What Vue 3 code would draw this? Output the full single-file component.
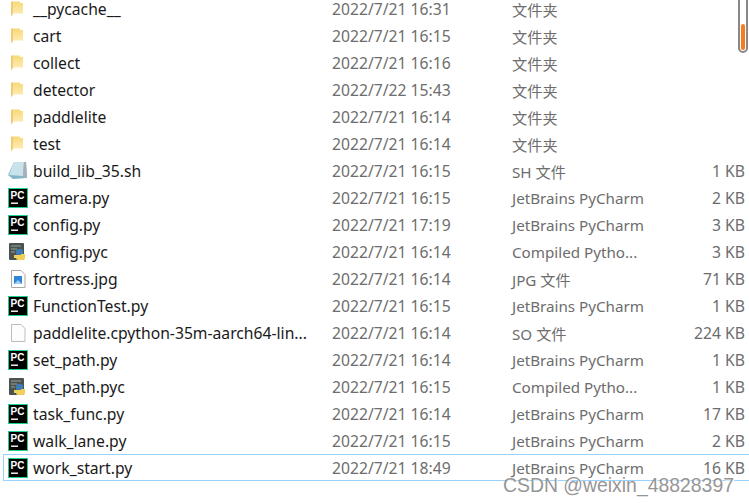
<template>
  <div class="page">
    <ul class="files">
      <li v-for="file in files" :key="file.name" class="row" :class="{ selected: file.selected }">
        <span class="icon">
          <svg v-if="file.icon === 'folder'" width="20" height="20" viewBox="0 0 20 20">
            <defs>
              <linearGradient id="fold" x1="0" y1="0" x2="0" y2="1">
                <stop offset="0" stop-color="#f8d978" />
                <stop offset="1" stop-color="#fdeab0" />
              </linearGradient>
            </defs>
            <path d="M5 2.5 L12 2.5 L12 4 L15 4 L15 14.5 L5 14.5 Z" fill="url(#fold)" />
            <path d="M3 3 L5 2 L5 15 L3 17.5 Z" fill="#efcb78" />
          </svg>
          <svg v-else-if="file.icon === 'pc'" width="20" height="20" viewBox="0 0 20 20">
            <rect x="0.5" y="0.5" width="19" height="19" fill="#000" stroke="#1fd08a" />
            <text x="2.6" y="11" class="pc">PC</text>
            <rect x="3" y="14.5" width="7" height="1.4" fill="#fff" />
          </svg>
          <svg v-else-if="file.icon === 'pyc'" width="20" height="20" viewBox="0 0 20 20">
            <rect x="1" y="1" width="15" height="17" rx="1" fill="#4b5350" />
            <path d="M3 4h10M3 7h6M3 10h4" stroke="#7c8783" stroke-width="1.5" />
            <path d="M8 12 V9 q0 -2 2 -2 h3 q2 0 2 2 v4 h-5 q-2 0 -2 -1 z" fill="#3d7db3" />
            <path d="M6 13 h7 v-1 h4 v4 q0 2 -2 2 h-5 q-2 0 -2 -2 l-2 0 z" fill="#f2cf57" />
          </svg>
          <svg v-else-if="file.icon === 'sh'" width="20" height="20" viewBox="0 0 20 20">
            <path d="M6 1 L18 1 L19 17 L5 18 L0 14 Z" fill="#7fb7c9" />
            <path d="M6 1 L16 1 L15 15 L1 14 Z" fill="#c8e3ea" />
            <path d="M16 1 L18 1 L19 17 L15 17 Z" fill="#a8b0b5" />
          </svg>
          <svg v-else-if="file.icon === 'jpg'" width="20" height="20" viewBox="0 0 20 20">
            <path d="M3.5 1.5 H13 L17 5.5 V18.5 H3.5 Z" fill="#fff" stroke="#a8a8a8" />
            <rect x="6" y="7" width="8" height="8" fill="#2f86d8" />
            <path d="M6 15 L10 11 L14 15 Z" fill="#9ad0f5" />
          </svg>
          <svg v-else width="20" height="20" viewBox="0 0 20 20">
            <path d="M3.5 1.5 H13 L17 5.5 V18.5 H3.5 Z" fill="#fdfdfd" stroke="#bcbcbc" />
          </svg>
        </span>
        <span class="name">{{ file.name }}</span>
        <span class="date">{{ file.date }}</span>
        <span class="type">{{ file.type }}</span>
        <span class="size">{{ file.size }}</span>
      </li>
    </ul>

    <div class="scrollbar"><div class="thumb"></div></div>
    <div class="watermark">CSDN @weixin_48828397</div>
  </div>
</template>

<script setup>
const PY = "JetBrains PyCharm"
const DIR = "文件夹"

const files = [
  { name: "__pycache__", date: "2022/7/21 16:31", type: DIR, size: "", icon: "folder" },
  { name: "cart", date: "2022/7/21 16:15", type: DIR, size: "", icon: "folder" },
  { name: "collect", date: "2022/7/21 16:16", type: DIR, size: "", icon: "folder" },
  { name: "detector", date: "2022/7/22 15:43", type: DIR, size: "", icon: "folder" },
  { name: "paddlelite", date: "2022/7/21 16:14", type: DIR, size: "", icon: "folder" },
  { name: "test", date: "2022/7/21 16:14", type: DIR, size: "", icon: "folder" },
  { name: "build_lib_35.sh", date: "2022/7/21 16:15", type: "SH 文件", size: "1 KB", icon: "sh" },
  { name: "camera.py", date: "2022/7/21 16:15", type: PY, size: "2 KB", icon: "pc" },
  { name: "config.py", date: "2022/7/21 17:19", type: PY, size: "3 KB", icon: "pc" },
  { name: "config.pyc", date: "2022/7/21 16:14", type: "Compiled Pytho...", size: "3 KB", icon: "pyc" },
  { name: "fortress.jpg", date: "2022/7/21 16:14", type: "JPG 文件", size: "71 KB", icon: "jpg" },
  { name: "FunctionTest.py", date: "2022/7/21 16:15", type: PY, size: "1 KB", icon: "pc" },
  { name: "paddlelite.cpython-35m-aarch64-lin...", date: "2022/7/21 16:14", type: "SO 文件", size: "224 KB", icon: "blank" },
  { name: "set_path.py", date: "2022/7/21 16:14", type: PY, size: "1 KB", icon: "pc" },
  { name: "set_path.pyc", date: "2022/7/21 16:15", type: "Compiled Pytho...", size: "1 KB", icon: "pyc" },
  { name: "task_func.py", date: "2022/7/21 16:14", type: PY, size: "17 KB", icon: "pc" },
  { name: "walk_lane.py", date: "2022/7/21 16:15", type: PY, size: "2 KB", icon: "pc" },
  { name: "work_start.py", date: "2022/7/21 18:49", type: PY, size: "16 KB", icon: "pc", selected: true },
]
</script>

<style>
html, body {
  margin: 0;
  background: #fff;
}
</style>

<style scoped>
.page {
  position: relative;
  width: 749px;
  height: 503px;
  overflow: hidden;
  background: #fff;
  font-family: "Noto Sans", "Noto Sans CJK SC", sans-serif;
  font-size: 15.7px;
}

.files {
  list-style: none;
  margin: -5px 0 0;
  padding: 0;
}

.row {
  display: grid;
  grid-template-columns: 20px 304px 180px 130px 1fr;
  align-items: center;
  height: 27px;
  box-sizing: border-box;
  padding: 0 4px 0 8px;
}

.row.selected {
  margin-left: 3px;
  padding-left: 4px;
  border: 1px solid #99d1ff;
  border-right: none;
}

.icon {
  display: flex;
  width: 20px;
  height: 20px;
}

.pc {
  font-family: "Liberation Sans", sans-serif;
  font-size: 10px;
  font-weight: bold;
  fill: #fff;
}

.name {
  padding-left: 5px;
  padding-top: 1px;
  color: #1a1a1a;
  white-space: nowrap;
}

.date,
.type,
.size {
  color: #6d6d6d;
  white-space: nowrap;
}

.date,
.size {
  padding-top: 1px;
}

.type {
  font-size: 15.2px;
}

.size {
  text-align: right;
}

.scrollbar {
  position: absolute;
  top: -10px;
  left: 738px;
  width: 10px;
  height: 63px;
  box-sizing: border-box;
  border: 2px solid #888;
  border-radius: 5px;
  background: #fff;
}

.thumb {
  position: absolute;
  left: 1px;
  bottom: 1px;
  width: 4px;
  height: 26px;
  border-radius: 2px;
  background: #f97a1f;
}

.watermark {
  position: absolute;
  left: 503px;
  top: 474px;
  font-family: "Liberation Sans", sans-serif;
  font-size: 19.4px;
  line-height: 22px;
  color: #969696;
  text-shadow: 1px 1px 0 #fff;
  white-space: nowrap;
}
</style>
